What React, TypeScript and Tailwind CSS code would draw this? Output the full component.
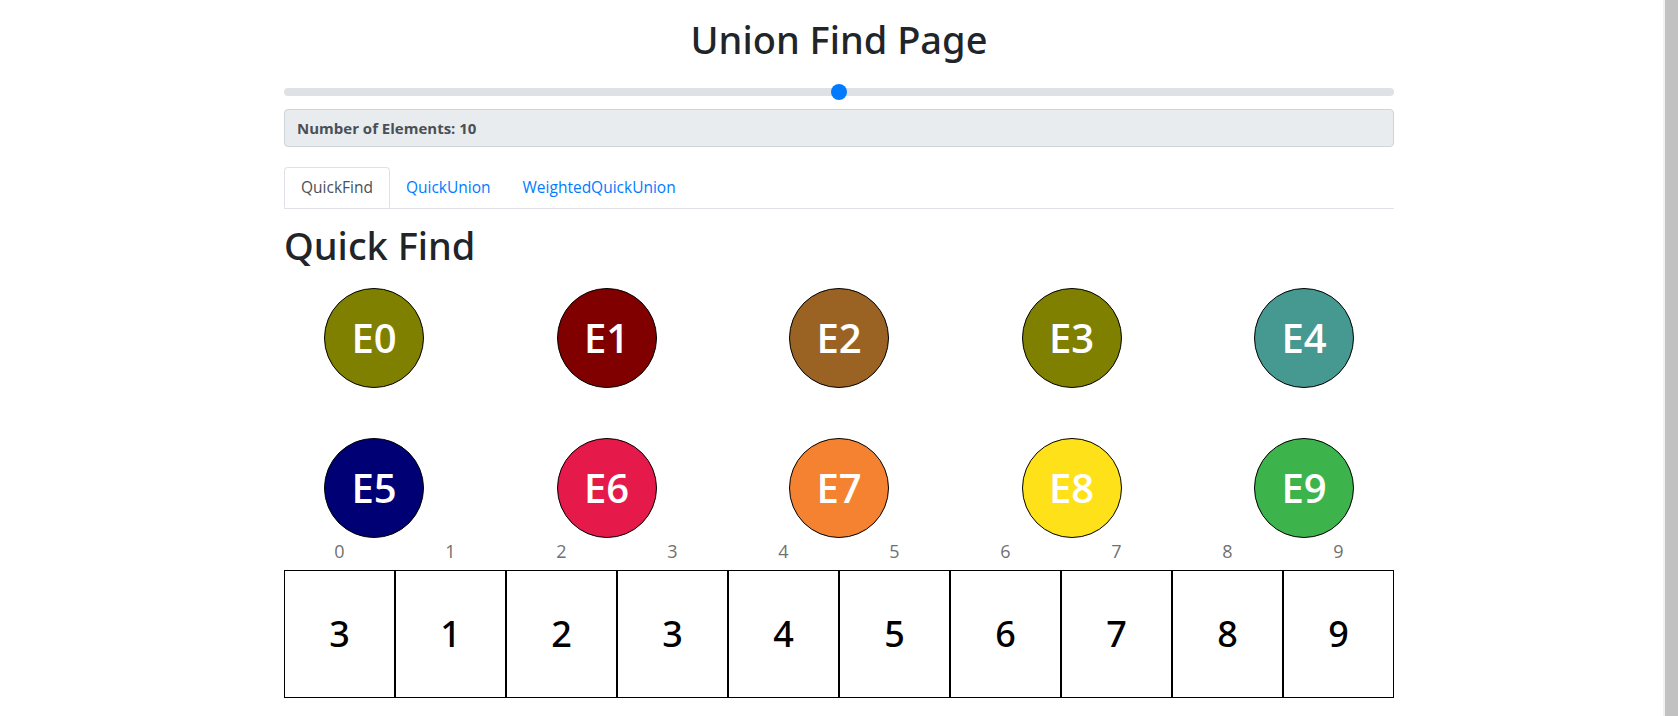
import React from "react";

const colors = [
  "bg-[#808000]",
  "bg-[#800000]",
  "bg-[#9A6324]",
  "bg-[#808000]",
  "bg-[#469990]",
  "bg-[#000075]",
  "bg-[#e6194B]",
  "bg-[#f58231]",
  "bg-[#ffe119]",
  "bg-[#3cb44b]",
];

const ids = [3, 1, 2, 3, 4, 5, 6, 7, 8, 9];

const noto = { fontFamily: '"Noto Sans", "Open Sans", sans-serif' };

function Circle({ i }: { i: number }) {
  return (
    <div
      className={`w-[100px] h-[100px] rounded-full border border-black flex items-center justify-center text-white text-[40px] font-semibold ${colors[i]}`}
    >
      E{i}
    </div>
  );
}

export default function App() {
  const font = { fontFamily: '"Open Sans", "Noto Sans", "Liberation Sans", sans-serif' };
  return (
    <div className="relative w-[1678px] h-[716px] overflow-hidden bg-white text-[#212529]" style={font}>
      <div className="w-[1110px] mx-auto pt-[15px]">
        <h1 className="text-[38px] leading-[48px] font-medium text-center" style={noto}>
          Union Find Page
        </h1>

        <div className="relative h-[16px] mt-[21px] flex items-center">
          <div className="w-full h-[8px] rounded-full bg-[#dee2e6]" />
          <div className="absolute left-[547px] top-0 w-[16px] h-[16px] rounded-full bg-[#007bff]" />
        </div>

        <div className="mt-[9px] h-[38px] border border-[#ced4da] rounded-[4px] bg-[#e9ecef] flex items-center px-[12px] text-[15px] font-bold text-[#495057]">
          Number of Elements: 10
        </div>

        <div className="mt-[20px] flex border-b border-[#dee2e6] text-[15.5px]">
          <div className="-mb-px h-[41px] px-[16px] flex items-center border border-[#dee2e6] border-b-white rounded-t-[4px] bg-white text-[#495057]">
            QuickFind
          </div>
          <div className="h-[41px] px-[16px] flex items-center text-[#007bff]">QuickUnion</div>
          <div className="h-[41px] px-[16px] flex items-center text-[#007bff]">WeightedQuickUnion</div>
        </div>

        <h1 className="mt-[12px] text-[38px] leading-[48px] font-medium" style={noto}>
          Quick Find
        </h1>

        <div className="mt-[19px] px-[40px] flex justify-between">
          {[0, 1, 2, 3, 4].map((i) => (
            <Circle key={i} i={i} />
          ))}
        </div>
        <div className="mt-[50px] px-[40px] flex justify-between">
          {[5, 6, 7, 8, 9].map((i) => (
            <Circle key={i} i={i} />
          ))}
        </div>

        <div className="mt-[1px] flex h-[24px] items-center">
          {ids.map((_, i) => (
            <div key={i} className="w-[111px] text-center text-[18px] text-[#717171] leading-[24px]">
              {i}
            </div>
          ))}
        </div>

        <div className="mt-[7px] flex">
          {ids.map((v, i) => (
            <div
              key={i}
              className="w-[111px] h-[128px] border border-black flex items-center justify-center text-[36px] font-medium text-black"
              style={noto}
            >
              {v}
            </div>
          ))}
        </div>
      </div>

      <div className="absolute right-0 top-0 w-[15px] h-full bg-[#f1f1f1] pl-[2px]">
        <div className="w-full h-full bg-[#c1c1c1]" />
      </div>
    </div>
  );
}
